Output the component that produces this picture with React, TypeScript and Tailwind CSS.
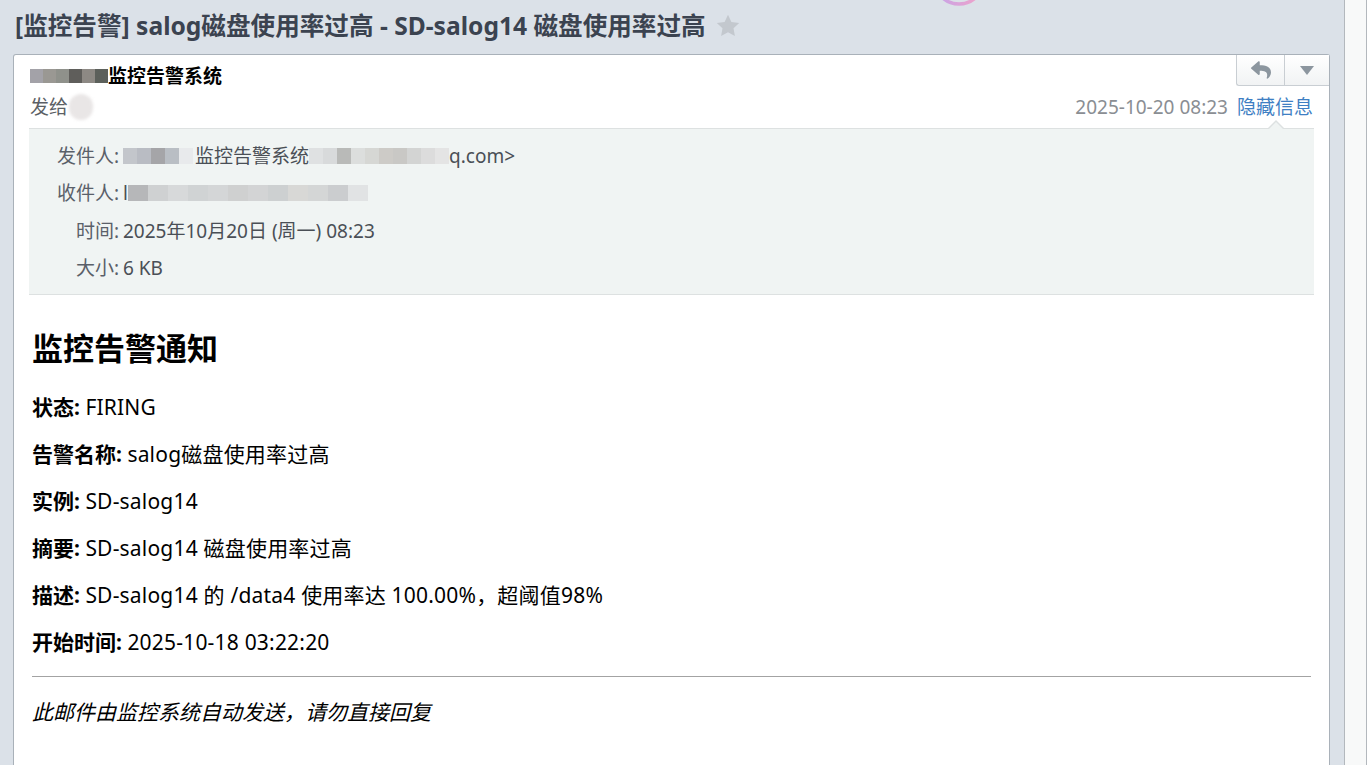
import { FaReply } from "react-icons/fa";

const fontStack = "font-['Noto_Sans','Noto_Sans_CJK_SC',sans-serif]";

// grey pixel blocks standing in for the mosaic that hides names / addresses
function Mosaic({ shades, cell = 13, h = 14 }: { shades: string[]; cell?: number; h?: number }) {
  return (
    <span className="inline-flex align-middle blur-[0.6px]">
      {shades.map((c, i) => (
        <span key={i} style={{ background: c, width: cell, height: h }} />
      ))}
    </span>
  );
}

function ReplyButtons() {
  return (
    <div className="absolute right-0 top-0 flex h-[31px] overflow-hidden rounded-bl-[3px] border-b border-l border-[#c9ced3] bg-gradient-to-b from-white to-[#f1f3f4]">
      <button type="button" className="flex w-[48px] items-center justify-center border-r border-[#c9ced3] text-[#8c969f]">
        <FaReply className="size-[20px]" />
      </button>
      <button type="button" className="flex w-[44px] items-center justify-center">
        <span className="h-0 w-0 border-x-[7px] border-t-[9px] border-x-transparent border-t-[#8c969f]" />
      </button>
    </div>
  );
}

function InfoRow({ label, children }: { label: string; children: React.ReactNode }) {
  return (
    <div className="flex h-[37.5px] items-center">
      <span className="w-[90px] shrink-0 text-right text-[#5a6069]">{label}:</span>
      <span className="ml-[4px] flex items-center text-[#4a4f56]">{children}</span>
    </div>
  );
}

const fields: [string, string][] = [
  ["状态", "FIRING"],
  ["告警名称", "salog磁盘使用率过高"],
  ["实例", "SD-salog14"],
  ["摘要", "SD-salog14 磁盘使用率过高"],
  ["描述", "SD-salog14 的 /data4 使用率达 100.00%，超阈值98%"],
  ["开始时间", "2025-10-18 03:22:20"],
];

export default function App() {
  return (
    <div className={`flex h-[765px] w-full overflow-hidden bg-[#dbe1e8] ${fontStack}`}>
      <div className="relative flex flex-1 flex-col pl-[13px] pr-[14px]">
        {/* decorative ring peeking in from the top */}
        <svg className="absolute left-[930px] top-[-50px]" width="58" height="58" viewBox="0 0 58 58" aria-hidden>
          <defs>
            <linearGradient id="ring" x1="0" x2="1" y1="0" y2="0">
              <stop offset="0" stopColor="#c4a4ea" />
              <stop offset="1" stopColor="#f3a2c6" />
            </linearGradient>
          </defs>
          <circle cx="29" cy="29" r="25" fill="none" stroke="url(#ring)" strokeWidth="3.5" />
        </svg>

        <div className="flex h-[54px] items-center pb-[2px] pl-[2px]">
          <h1 className="whitespace-nowrap text-[24.6px] font-bold leading-[30px] text-[#3b4350]">
            [监控告警] salog磁盘使用率过高 - SD-salog14 磁盘使用率过高
          </h1>
          <svg className="ml-[10px] mt-[-2px]" width="24" height="23" viewBox="0 0 24 23" aria-hidden>
            <path d="M12 0.8l3.4 7.1 7.8 1-5.7 5.4 1.4 7.7L12 18.3l-6.9 3.7 1.4-7.7L0.8 8.9l7.8-1z" fill="#c3c8ce" />
          </svg>
        </div>

        <div className="relative flex-1 rounded-tl-[3px] rounded-tr-[3px] border border-b-0 border-[#a9b1b9] bg-white">
          <ReplyButtons />

          <div className="px-[16px] pt-[8px]">
            <div className="flex h-[26px] items-center text-[19px] font-bold text-black">
              <Mosaic shades={["#a3a2a8", "#9a9893", "#8f918b", "#5f5e5b", "#8d8984", "#5c605b"]} />
              <span>监控告警系统</span>
            </div>
            <div className="flex h-[36px] items-center justify-between text-[19px]">
              <div className="flex items-center text-[#5b5f65]">
                <span>发给</span>
                <span className="ml-[1px] h-[26px] w-[24px] rounded-full bg-[#e9e6e6] blur-[1.5px]" />
              </div>
              <div className="flex items-center gap-[9px]">
                <span className="text-[#8a8e93]">2025-10-20 08:23</span>
                <a className="text-[#3f7fc3]">隐藏信息</a>
              </div>
            </div>
          </div>

          <div className="relative mx-[15px] mt-[3px] border-y border-[#dde1e1] bg-[#f0f4f3] pb-[7px] pt-[8px] text-[19px]">
            <span className="absolute right-[29px] top-[-9px] h-0 w-0 border-x-[9px] border-b-[9px] border-x-transparent border-b-[#dde1e1]" />
            <span className="absolute right-[30px] top-[-7px] h-0 w-0 border-x-[8px] border-b-[8px] border-x-transparent border-b-[#f0f4f3]" />
            <InfoRow label="发件人">
              <Mosaic shades={["#c3c6cb", "#b9bcc3", "#a5a5a8", "#b9bec4", "#e8eaec"]} cell={14} h={16} />
              <span className="ml-[2px]">监控告警系统</span>
              <Mosaic shades={["#dfe1e2", "#d8dadb", "#b9bab8", "#dcdedd", "#d6d7d4", "#cdcbc7", "#c9c8c5", "#d3d4d3", "#dcdcdc", "#e4e4e4"]} cell={14} h={16} />
              <span>q.com&gt;</span>
            </InfoRow>
            <InfoRow label="收件人">
              <span>l</span>
              <Mosaic shades={["#b6b7b9", "#cfd1d2", "#d7d9da", "#d0d3d4", "#d4d6d7", "#cfd0d0", "#d3d4d5", "#cdd0d1", "#d8d8d6", "#d4d6d6", "#cbcdcf", "#e1e3e4"]} cell={20} h={16} />
            </InfoRow>
            <InfoRow label="时间">2025年10月20日 (周一) 08:23</InfoRow>
            <InfoRow label="大小">6 KB</InfoRow>
          </div>

          <div className="px-[18px] pt-[33px] text-[21px] text-black">
            <h2 className="mb-[26px] text-[31px] font-bold leading-[40px]">监控告警通知</h2>
            {fields.map(([k, v]) => (
              <p key={k} className="mb-[21px] leading-[26px]">
                <b className="font-bold">{k}:</b> <span className="tracking-[0.2px]">{v}</span>
              </p>
            ))}
            <hr className="mb-[22px] border-t border-[#a3a3a3]" />
            <p className="leading-[26px] italic">此邮件由监控系统自动发送，请勿直接回复</p>
          </div>
        </div>
      </div>

      <div className="w-[23px] border-x border-[#b3b8bd] bg-[#f8f9f9]" />
    </div>
  );
}
